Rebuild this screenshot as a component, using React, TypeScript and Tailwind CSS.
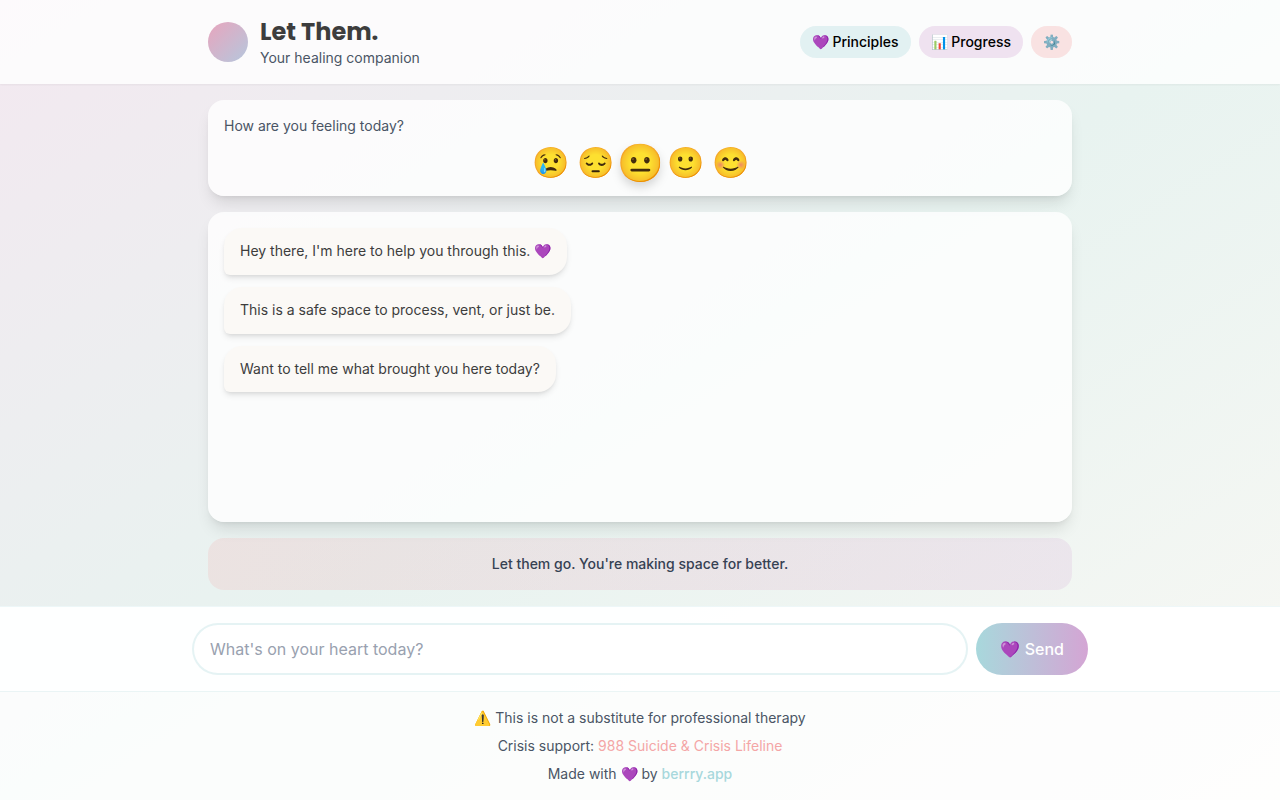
import { useState } from "react";

const moods = [
  { emoji: "😢", label: "Very sad" },
  { emoji: "😔", label: "Sad" },
  { emoji: "😐", label: "Neutral" },
  { emoji: "🙂", label: "Good" },
  { emoji: "😊", label: "Happy" },
];

const initialMessages = [
  "Hey there, I'm here to help you through this. 💜",
  "This is a safe space to process, vent, or just be.",
  "Want to tell me what brought you here today?",
];

const Header = () => (
  <header className="bg-white/80 shadow-xs">
    <div className="mx-auto flex max-w-4xl items-center justify-between px-4 py-4">
      <div className="flex items-center gap-3">
        <div className="h-10 w-10 rounded-full bg-linear-to-br/srgb from-[#e8a5bd] to-[#b5c7dd]" />
        <div>
          <h1 className="font-['Poppins','Inter',sans-serif] text-2xl font-bold text-[#3d3d3d]">Let Them.</h1>
          <p className="text-sm text-gray-600">Your healing companion</p>
        </div>
      </div>
      <nav className="flex items-center gap-2">
        <button className="rounded-full bg-[#a8d8dc]/30 px-3 py-1.5 text-sm font-medium">💜 Principles</button>
        <button className="rounded-full bg-[#d4a5d4]/30 px-3 py-1.5 text-sm font-medium">📊 Progress</button>
        <button aria-label="Settings" className="rounded-full bg-[#f4a6a6]/30 px-3 py-1.5 text-sm font-medium">⚙️</button>
      </nav>
    </div>
  </header>
);

const MoodPicker = () => {
  const [selected, setSelected] = useState(2);

  return (
    <section className="rounded-2xl bg-white/80 p-4 shadow-lg">
      <p className="mb-2 text-sm text-gray-600">How are you feeling today?</p>
      <div className="flex justify-center gap-2">
        {moods.map((mood, index) => (
          <button
            key={mood.label}
            aria-label={mood.label}
            onClick={() => setSelected(index)}
            className={
              index === selected
                ? "scale-125 text-3xl drop-shadow-[0_4px_4px_rgba(0,0,0,0.15)] transition-transform"
                : "text-3xl transition-transform"
            }
          >
            {mood.emoji}
          </button>
        ))}
      </div>
    </section>
  );
};

const Footer = () => (
  <footer className="border-t border-[#a8d8dc]/20 bg-white/80 px-4 py-4">
    <div className="space-y-2 text-center text-sm text-gray-600">
      <p>⚠️ This is not a substitute for professional therapy</p>
      <p>
        Crisis support: <a href="tel:988" className="text-[#f4a6a6]">988 Suicide &amp; Crisis Lifeline</a>
      </p>
      <p>
        Made with 💜 by <a href="#" className="font-medium text-[#a8d8dc]">berrry.app</a>
      </p>
    </div>
  </footer>
);

const App = () => {
  const [messages, setMessages] = useState(initialMessages);
  const [draft, setDraft] = useState("");

  const handleSubmit = (event: React.FormEvent) => {
    event.preventDefault();
    if (!draft.trim()) return;
    setMessages([...messages, draft]);
    setDraft("");
  };

  return (
    <div className="flex min-h-screen flex-col bg-linear-to-br/srgb from-[#f3e8f0] via-[#e8f3f0] to-[#f9f8f4] font-['Inter',sans-serif] text-black">
      <Header />

      <main className="mx-auto flex w-full max-w-4xl flex-1 flex-col gap-4 p-4">
        <MoodPicker />

        <section className="flex flex-1 flex-col items-start gap-3 rounded-2xl bg-white/80 p-4 shadow-lg">
          {messages.map((message, index) => (
            <p
              key={index}
              className="rounded-[18px] rounded-bl-md bg-[#fbf9f6] px-4 py-3 text-sm leading-relaxed text-[#3d3d3d] shadow-md"
            >
              {message}
            </p>
          ))}
        </section>

        <div className="rounded-2xl bg-linear-to-r/srgb from-[#f4a6a6]/20 to-[#d4a5d4]/20 p-4 text-center">
          <p className="text-sm font-medium text-gray-700">Let them go. You're making space for better.</p>
        </div>
      </main>

      <div className="border-t border-[#a8d8dc]/20 bg-white/95 py-4">
        <form onSubmit={handleSubmit} className="mx-auto flex max-w-4xl gap-2">
          <input
            type="text"
            aria-label="Message"
            value={draft}
            onChange={(event) => setDraft(event.target.value)}
            placeholder="What's on your heart today?"
            className="min-w-0 flex-1 rounded-full border-2 border-[#a8d8dc]/30 bg-white px-4 py-3 outline-none placeholder:text-gray-400"
          />
          <button
            type="submit"
            className="rounded-full bg-linear-to-r/srgb from-[#a8d8dc] to-[#d4a5d4] px-6 py-3 font-medium text-white"
          >
            💜 Send
          </button>
        </form>
      </div>

      <Footer />
    </div>
  );
};

export default App;
